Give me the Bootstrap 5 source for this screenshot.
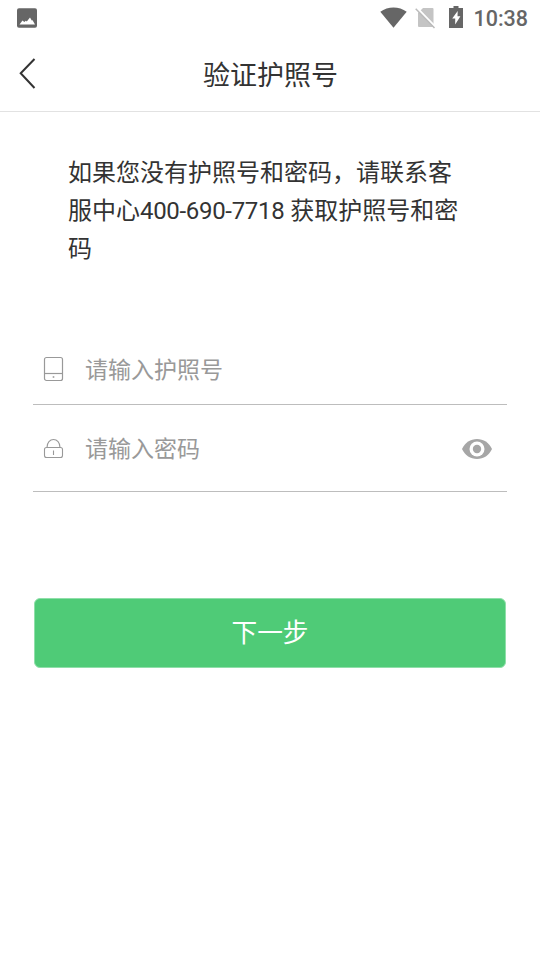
<!DOCTYPE html>
<html lang="zh-CN">
<head>
<meta charset="utf-8">
<meta name="viewport" content="width=device-width, initial-scale=1">
<title>验证护照号</title>
<link href="https://cdn.jsdelivr.net/npm/bootstrap@5.3.0/dist/css/bootstrap.min.css" rel="stylesheet">
<style>
  body { font-family: Roboto, "Noto Sans CJK SC", sans-serif; color: #333; background: #fff; }
  svg { display: block; flex: none; }
  .status-bar { height: 36px; padding: 0 12px 0 17px; color: #666; }
  .battery { margin-bottom: 2px; }
  .clock { font-size: 21.5px; font-weight: 500; line-height: 36px; margin-left: 9px; padding-top: 1px; }
  .title-bar { height: 76px; border-bottom: 1px solid #e2e2e2; padding: 0 18px; }
  .title-bar h1 { font-size: 27px; font-weight: 400; line-height: 40px; padding: 4px 0 0 1px; }
  .back-btn { width: 20px; }
  .notice { font-size: 24px; line-height: 38px; padding: 42px 68px 0; margin-bottom: 67px; }
  .phone { letter-spacing: -.32px; margin-right: 6px; }
  .form-area { padding: 0 33px; }
  .field { border-bottom: 1px solid #bdbdbd; padding: 0 14px 0 10px; }
  .field-id { height: 70px; }
  .field-id svg { margin-bottom: 2px; }
  .field-id input { padding-top: 2px !important; }
  .field-pw { height: 87px; padding-top: 2px; }
  .field-pw input { padding-top: 1px !important; }
  .field input { font-size: 23px; line-height: 34px; color: #333; margin-left: 21px; }
  .field input::placeholder { color: #999; opacity: 1; }
  .next-btn { --bs-btn-bg: #4fcb77; --bs-btn-border-color: #8fdfa9; --bs-btn-color: #fff; --bs-btn-border-radius: 6px;
    height: 70px; width: 472px; margin: 106px 0 0 1px; font-size: 25.7px; line-height: 38px; padding: 0; }
</style>
<script src="https://cdn.jsdelivr.net/npm/bootstrap@5.3.0/dist/js/bootstrap.bundle.min.js"></script>
</head>
<body>
<div class="status-bar d-flex align-items-center">
  <svg width="20" height="20" viewBox="0 0 20 20"><rect y=".3" width="20" height="19.4" rx="2" fill="#666"/><path d="M2.500 16.500 5.500 12.500l1.800 1.500 1.500-1.200 1 .8 3.200-4 1.800 3 .8-.4 2.400 4.300z" fill="#fff"/></svg>
  <div class="d-flex align-items-center ms-auto">
    <svg width="27" height="22" viewBox="0 0 27 22"><path d="M.3 4.700C8-1 19-1 26.700 4.700L13.500 20.700z" fill="#666"/></svg>
    <svg class="ms-2" width="21" height="22" viewBox="0 0 21 22"><path d="M8 1h9.500q1 0 1 1v17q0 1-1 1H4q-1 0-1-1V6z" fill="#c4c4c4"/><path d="M1.800 .7 20.600 20" stroke="#fff" stroke-width="2"/><path d="M.7 1.700 19.500 21" stroke="#bbb" stroke-width="1.500"/></svg>
    <svg class="battery" width="28" height="24" viewBox="0 0 28 24"><path d="M17.500 1h5v2H27v20H13V3h4.500z" fill="#666"/><path d="m21.700 6-5.500 7.500h3v6l5.200-8.300h-2.900z" fill="#fff"/></svg>
    <span class="clock">10:38</span>
  </div>
</div>
<header class="title-bar d-flex align-items-center justify-content-between">
  <a class="back-btn" href="#" aria-label="返回"><svg width="20" height="34" viewBox="0 0 20 34"><path d="M16.500 2 2.700 16.300 16.500 31" fill="none" stroke="#333" stroke-width="2"/></svg></a>
  <h1 class="mb-0">验证护照号</h1>
  <span class="back-btn"></span>
</header>
<main>
  <div class="notice">
    <div class="text-nowrap">如果您没有护照号和密码，请联系客</div>
    <div class="d-flex text-nowrap"><span>服中心</span><span class="phone">400-690-7718</span><span>获取护照号和密</span></div>
    <div>码</div>
  </div>
  <form class="form-area">
    <div class="field field-id d-flex align-items-center">
      <svg width="21" height="26" viewBox="0 0 21 26" fill="none" stroke="#999" stroke-width="1.200"><rect x="1.500" y="1.500" width="18" height="23" rx="2"/><path d="M1.500 17.500h18"/><path d="M9.700 21h1.600" stroke-width="1.600"/></svg>
      <input class="form-control border-0 shadow-none p-0 bg-transparent" type="text" placeholder="请输入护照号">
    </div>
    <div class="field field-pw d-flex align-items-center">
      <svg width="21" height="22" viewBox="0 0 21 22" fill="none" stroke="#999" stroke-width="1.100"><rect x="1.500" y="9.500" width="18" height="10" rx="2"/><path d="M4 9.500C4 4.500 7 1.500 10.500 1.500S17 4.500 17 9.500M10.500 12.500v4.500"/></svg>
      <input class="form-control border-0 shadow-none p-0 bg-transparent" type="password" placeholder="请输入密码">
      <svg width="32" height="22" viewBox="0 0 32 22"><path d="M1 11C4 4.500 9.500 1 16 1s12 3.500 15 10c-3 6.500-8.500 10-15 10S4 17.500 1 11z" fill="#a6a6a6"/><circle cx="16" cy="11" r="7.500" fill="#fff"/><circle cx="16" cy="11" r="4.200" fill="#a6a6a6"/></svg>
    </div>
    <button class="btn next-btn d-block" type="button">下一步</button>
  </form>
</main>
</body>
</html>
